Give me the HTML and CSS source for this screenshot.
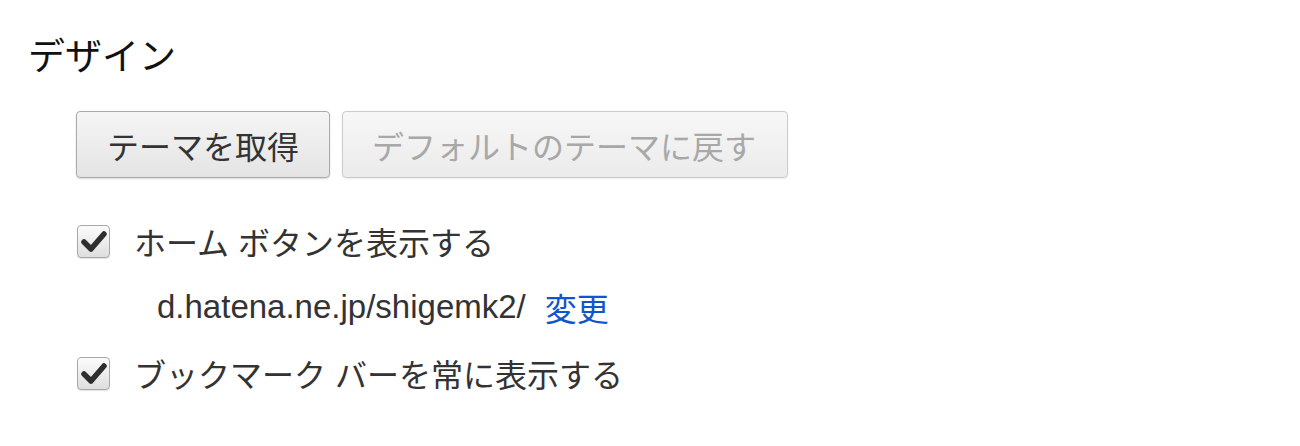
FILE: index.html
```html
<!DOCTYPE html>
<html lang="ja">

<head>
    <meta charset="UTF-8">
    <title>設定</title>
    <link rel="stylesheet" href="styles.css">
</head>

<body>
    <section class="settings">
        <h3 class="section-title">デザイン</h3>
        <div class="section-body">
            <div class="button-row">
                <button type="button" class="btn">テーマを取得</button>
                <button type="button" class="btn" disabled>デフォルトのテーマに戻す</button>
            </div>

            <label class="check-row">
                <span class="checkbox">
                    <svg viewBox="0 0 32 32" width="32" height="32">
                        <path d="M7 17 L14 24 L27 9" fill="none" stroke="#2e2e2e" stroke-width="5.5" stroke-linecap="round" stroke-linejoin="round"/>
                    </svg>
                </span>
                <span class="check-label">ホーム ボタンを表示する</span>
            </label>

            <div class="home-url">
                <span class="url">d.hatena.ne.jp/shigemk2/</span>
                <a href="#" class="link">変更</a>
            </div>

            <label class="check-row">
                <span class="checkbox">
                    <svg viewBox="0 0 32 32" width="32" height="32">
                        <path d="M7 17 L14 24 L27 9" fill="none" stroke="#2e2e2e" stroke-width="5.5" stroke-linecap="round" stroke-linejoin="round"/>
                    </svg>
                </span>
                <span class="check-label">ブックマーク バーを常に表示する</span>
            </label>
        </div>
    </section>
</body>

</html>
```

FILE: styles.css
```css
body {
    margin: 0;
    background: #fff;
    font-family: "Liberation Sans", "Noto Sans CJK JP", sans-serif;
    color: #303030;
}

.settings {
    padding: 36px 0 0 28px;
}

.section-title {
    margin: 0;
    font-size: 37px;
    font-weight: normal;
    line-height: 44px;
    color: #111;
}

.section-body {
    padding-left: 48px;
}

.button-row {
    display: flex;
    gap: 12px;
    margin-top: 31px;
}

.btn {
    height: 67px;
    padding: 0 30px;
    font-family: inherit;
    font-size: 32px;
    color: #333;
    background: linear-gradient(#f5f5f5, #e4e4e4);
    border: 1px solid #aaa;
    border-radius: 4px;
    box-shadow: 0 1px 2px rgba(0, 0, 0, 0.15);
}

.btn:disabled {
    padding: 0 31px 0 29px;
    color: #a8a8a8;
    border-color: #ccc;
    background: linear-gradient(#f7f7f7, #ebebeb);
    box-shadow: 0 1px 2px rgba(0, 0, 0, 0.08);
}

.check-row {
    display: flex;
    align-items: center;
    height: 66px;
    margin-top: 30px;
}

.check-row + .home-url + .check-row {
    margin-top: 0;
}

.checkbox {
    width: 31px;
    height: 31px;
    margin-left: 1px;
    border: 1px solid #a8a8a8;
    border-radius: 4px;
    background: linear-gradient(#fcfcfc, #dedede);
    box-shadow: 0 1px 1px rgba(0, 0, 0, 0.12);
    display: flex;
}

.checkbox svg {
    margin: -1px 0 0 -1px;
}

.check-label {
    margin-left: 24px;
    font-size: 32px;
    color: #333;
}

.home-url {
    display: flex;
    align-items: center;
    height: 66px;
    padding-left: 81px;
    font-size: 32px;
    color: #333;
}

.url {
    font-size: 33px;
}

.link {
    margin-left: 19px;
    color: #15c;
    text-decoration: none;
}
```
